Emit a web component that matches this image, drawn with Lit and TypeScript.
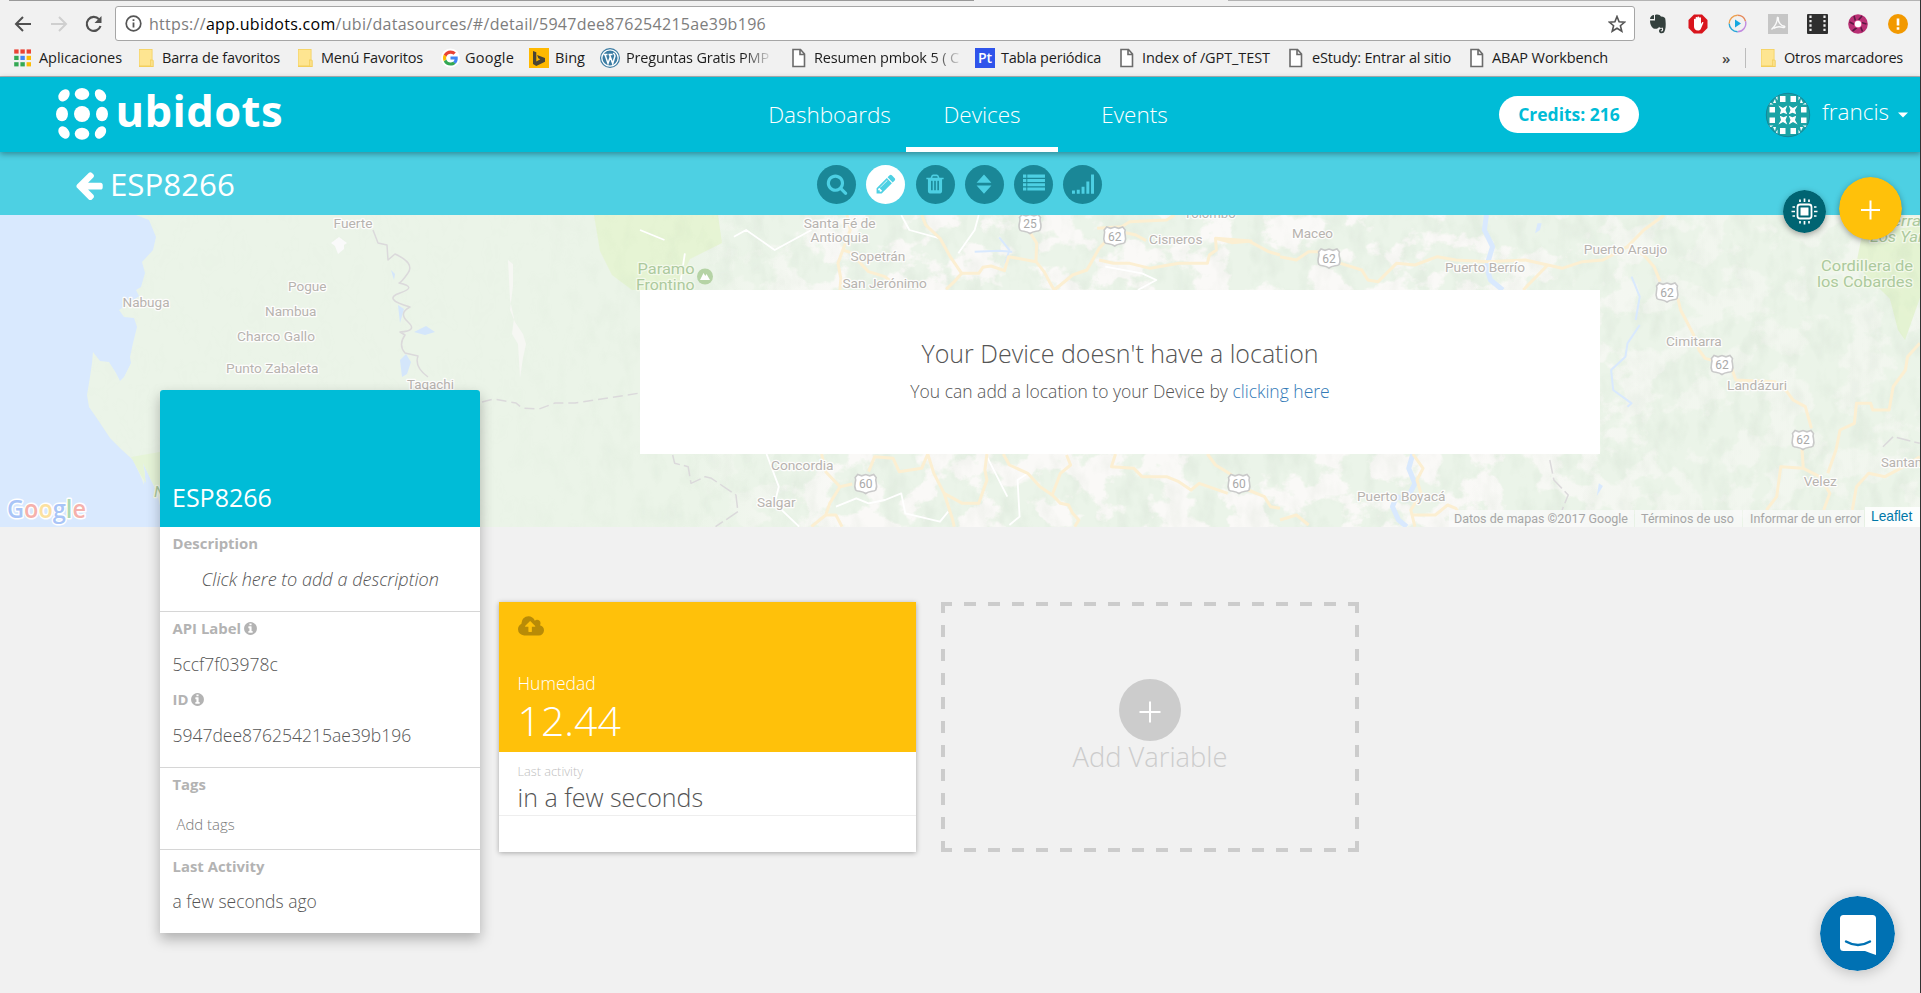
import { LitElement, html, svg, css } from "lit";
import { customElement, property } from "lit/decorators.js";

const P = {
  search: "M1216 832q0-185-131.5-316.5t-316.5-131.5-316.5 131.5-131.5 316.5 131.5 316.5 316.5 131.5 316.5-131.5 131.5-316.5zm512 832q0 52-38 90t-90 38q-54 0-90-38l-343-342q-179 124-399 124-143 0-273.5-55.5t-225-150-150-225-55.5-273.5 55.5-273.5 150-225 225-150 273.5-55.5 273.5 55.5 225 150 150 225 55.5 273.5q0 220-124 399l343 343q37 37 37 90z",
  pencil: "M491 1536l91-91-235-235-91 91v107h128v128h107zm523-928q0-22-22-22-10 0-17 7l-542 542q-7 7-7 17 0 22 22 22 10 0 17-7l542-542q7-7 7-17zm-54-192l416 416-832 832h-416v-416zm683 96q0 53-37 90l-166 166-416-416 166-165q36-38 90-38 53 0 91 38l235 234q37 39 37 91z",
  trash: "M704 1376v-704q0-14-9-23t-23-9h-64q-14 0-23 9t-9 23v704q0 14 9 23t23 9h64q14 0 23-9t9-23zm256 0v-704q0-14-9-23t-23-9h-64q-14 0-23 9t-9 23v704q0 14 9 23t23 9h64q14 0 23-9t9-23zm256 0v-704q0-14-9-23t-23-9h-64q-14 0-23 9t-9 23v704q0 14 9 23t23 9h64q14 0 23-9t9-23zm-544-992h448l-48-117q-7-9-17-11h-317q-10 2-17 11zm928 32v64q0 14-9 23t-23 9h-96v948q0 83-47 143.5t-113 60.5h-832q-66 0-113-58.5t-47-141.5v-952h-96q-14 0-23-9t-9-23v-64q0-14 9-23t23-9h309l70-167q15-37 54-63t79-26h320q40 0 79 26t54 63l70 167h309q14 0 23 9t9 23z",
  sort: "M896 130L1500 800H292zM896 1690L1500 1020H292z",
  list: "M0 130h270v250H0zM350 130h1440v250H350zM0 480h270v250H0zM350 480h1440v250H350zM0 830h270v250H0zM350 830h1440v250H350zM0 1180h270v250H0zM350 1180h1440v250H350z",
  signal: "M0 1430h240v270H0zM390 1370h240v330H390zM780 1110h240v590H780zM1170 700h240v1000H1170zM1550 130h250v1570H1550z",
  info: "M1152 1376v-160q0-14-9-23t-23-9h-96v-512q0-14-9-23t-23-9h-320q-14 0-23 9t-9 23v160q0 14 9 23t23 9h96v320h-96q-14 0-23 9t-9 23v160q0 14 9 23t23 9h448q14 0 23-9t9-23zm-128-896v-160q0-14-9-23t-23-9h-192q-14 0-23 9t-9 23v160q0 14 9 23t23 9h192q14 0 23-9t9-23zm640 416q0 209-103 385.5t-279.5 279.5-385.5 103-385.5-103-279.5-279.5-103-385.5 103-385.5 279.5-279.5 385.5-103 385.5 103 279.5 279.5 103 385.5z",
  cloud: "M1280 992q0-14-9-23l-352-352q-9-9-23-9t-23 9l-351 351q-10 12-10 24 0 14 9 23t23 9h224v352q0 13 9.5 22.5t22.5 9.5h192q13 0 22.5-9.5t9.5-22.5v-352h224q13 0 22.5-9.5t9.5-22.5zm640 288q0 159-112.5 271.5t-271.5 112.5h-1088q-185 0-316.5-131.5t-131.5-316.5q0-130 70-240t188-165q-2-30-2-43 0-212 150-362t362-150q156 0 285.5 87t188.5 231q71-62 166-62 106 0 181 75t75 181q0 76-41 138 130 31 213.5 135.5t83.5 238.5z",
  back: "M1664 896v128q0 53-32.5 90.5t-84.5 37.5h-704l293 294q38 36 38 90t-38 90l-75 76q-37 37-90 37-52 0-91-37l-651-652q-37-37-37-90 0-52 37-91l651-650q38-38 91-38 52 0 90 38l75 74q38 38 38 91t-38 91l-293 293h704q52 0 84.5 37.5t32.5 90.5z",
};

const fa = (name: keyof typeof P, w = 1792) =>
  html`<svg class="fa" viewBox="0 0 ${w} 1792"><path d=${P[name]} /></svg>`;

/* Text run whose letter spacing is set so that it spans a given advance. */
@customElement("fit-text")
class FitText extends LitElement {
  static styles = css`
    :host { display: inline-block; white-space: pre; }
  `;
  @property({ type: Number }) w = 0;
  render() {
    return html`<slot></slot>`;
  }
  firstUpdated() {
    const n = (this.textContent ?? "").length;
    const natural = this.getBoundingClientRect().width;
    if (n && this.w) this.style.letterSpacing = `${(this.w - natural) / n}px`;
  }
}

/* ---------- browser chrome ---------- */

const pageIcon = html`<svg class="bi" viewBox="0 0 14 20" width="14" height="20"><path d="M1 1.5h7.5l4 4.5v12.5H1zM8 1.5V6.5h4.5" fill="#fff" stroke="#6b6b6b" stroke-width="1.6" /></svg>`;
const folderIcon = html`<svg class="bi" viewBox="0 0 16 20" width="16" height="20"><path d="M1 1h13.5v10.5l1.2 1v6.5H1z" fill="#f3cf5c" /><path d="M1.5 1.8h12.2v9.6h-1.6v6H1.5z" fill="#fee591" /><path d="M12.8 12.5h2v5.4h-2z" fill="#fbe08a" /></svg>`;
const appColors = ["#ea4335", "#ea4335", "#ea4335", "#34a853", "#4285f4", "#fbbc05", "#34a853", "#34a853", "#fbbc05"];
const appsIcon = html`<svg class="bi" width="17" height="18" viewBox="0 0 17 18">
  ${appColors.map((c, i) => svg`<rect x=${(i % 3) * 6.2 + 0.2} y=${Math.floor(i / 3) * 6.4 + 0.4} width="4.4" height="4.2" fill=${c} />`)}
</svg>`;
const googleIcon = html`<svg class="bi" width="19" height="20" viewBox="0 0 48 48">
  <circle cx="24" cy="24" r="24" fill="#fff" />
  <path fill="#EA4335" d="M24 13c3 0 5.600 1 7.700 3l5.700-5.700C34 7.100 29.400 5 24 5 16.500 5 10.100 9.300 7 15.500l6.600 5.200C15.200 16.200 19.200 13 24 13z" />
  <path fill="#4285F4" d="M42.300 24.400c0-1.300-.1-2.600-.3-3.900H24v7.600h10.300c-.5 2.400-1.800 4.400-3.800 5.700l6.300 5C40.400 35.400 42.300 30.400 42.300 24.400z" />
  <path fill="#FBBC05" d="M13.600 27.300c-.4-1.100-.6-2.200-.6-3.400s.2-2.300.6-3.400L7 15.400C5.700 18 5 20.900 5 24s.7 6 2 8.500z" />
  <path fill="#34A853" d="M24 43c5.100 0 9.500-1.700 12.800-4.700l-6.300-4.900c-1.700 1.200-4 1.900-6.500 1.900-4.900 0-9-3.200-10.400-7.700L7 32.700C10.100 38.800 16.500 43 24 43z" />
</svg>`;
const bingIcon = html`<svg class="bi" width="20" height="20" viewBox="0 0 20 20"><rect width="20" height="20" fill="#ffb900" /><path d="M4 3l3.300 1.200v9.300l4-2.300-2-1-1.200-3.100 7.900 2.800v3.800L7.300 18 4 16z" fill="#4b4535" /></svg>`;
const wpIcon = html`<svg class="bi" width="20" height="20" viewBox="0 0 20 20"><circle cx="10" cy="10" r="10" fill="#3b7ca3" /><circle cx="10" cy="10" r="8.200" fill="none" stroke="#fff" stroke-width="1.300" /><path d="M3.500 6.500h4M8.500 6.500h4M5 6.500l3 9 2.200-6.500M9.500 6.500l3.200 9 2.300-7.500c0-1.500-1.300-2-1.500-3.200" fill="none" stroke="#fff" stroke-width="1.500" /></svg>`;
const ptIcon = html`<span class="pt">Pt</span>`;

const bookmarks: [unknown, string, number, string][] = [
  [appsIcon, "Aplicaciones", 83, "g8"],
  [folderIcon, "Barra de favoritos", 118, "g8"],
  [folderIcon, "Menú Favoritos", 102, "g8"],
  [googleIcon, "Google", 49, "g5"],
  [bingIcon, "Bing", 30, "g6"],
  [wpIcon, "Preguntas Gratis PMP", 143, "g6 fade"],
  [pageIcon, "Resumen pmbok 5 ( C", 145, "g8 fade"],
  [ptIcon, "Tabla periódica", 100, "g6"],
  [pageIcon, "Index of /GPT_TEST", 128, "g8"],
  [pageIcon, "eStudy: Entrar al sitio", 139, "g9"],
  [pageIcon, "ABAP Workbench", 116, "g8"],
];

@customElement("browser-chrome")
class BrowserChrome extends LitElement {
  static styles = css`
    :host { display: flex; flex-direction: column; height: 77px; box-sizing: border-box; background: #f1f1f1;
      border-bottom: 1px solid #aeb4b6; font-family: "Open Sans", "Noto Sans", sans-serif; font-weight: 400; }
    .edge { display: grid; grid-template-columns: 9px 965px 254px 1fr; height: 1px; }
    .edge .a { background: #999; grid-column: 2; }
    .edge .b { background: #b3b3b3; grid-column: 4; }
    .bar { display: flex; align-items: center; height: 45px; }
    .nav { display: grid; grid-template-columns: 36px 34px 1fr; width: 115px; padding-left: 14px; box-sizing: border-box; }
    .omni { display: flex; align-items: center; box-sizing: border-box; width: 1520px; height: 35px; background: #fff;
      border: 1px solid #a6a6a6; border-radius: 3px; padding: 0 8px 0 9px; }
    .url { flex: 1; padding-left: 7px; font-size: 16px; line-height: 32px; color: #7d7d7d; }
    .url fit-text { vertical-align: top; }
    .url b { font-weight: 400; color: #000; }
    .ext { display: grid; grid-template-columns: repeat(7, 40px); justify-items: center; margin-left: 2.500px; }
    .marks { display: grid; grid-template-columns: 124px 159px 144px 88px 71px 192px 183px 145px 169px 181px 252px 38px 1fr;
      height: 24px; padding-left: 14px; align-items: center; font-size: 14.500px; line-height: 20px; color: #1c1c1c; }
    .mk { display: flex; align-items: center; }
    .mk svg, .pt { flex: none; }
    .g5 { gap: 5px; } .g6 { gap: 6px; } .g8 { gap: 8px; } .g9 { gap: 9px; }
    .fade fit-text { -webkit-mask-image: linear-gradient(90deg, #000 82%, rgba(0,0,0,.15)); mask-image: linear-gradient(90deg, #000 82%, rgba(0,0,0,.15)); }
    .pt { width: 20px; height: 20px; background: #2f54eb; color: #fff; font: 600 14px/20px "Open Sans", sans-serif; text-align: center; }
    .more { font-size: 15px; font-weight: 600; color: #444; line-height: 20px; }
    .last { border-left: 1px solid #bcbcbc; margin-left: -15px; padding-left: 14px; height: 20px; }
  `;
  render() {
    return html`
      <div class="edge"><i class="a"></i><i class="b"></i></div>
      <div class="bar">
        <div class="nav">
          <svg width="18" height="18" viewBox="0 0 18 18"><path d="M17 9H2.500M9 2L2 9l7 7" fill="none" stroke="#505050" stroke-width="2" /></svg>
          <svg width="18" height="18" viewBox="0 0 18 18"><path d="M1 9h14.500M9 2l7 7-7 7" fill="none" stroke="#cfcfcf" stroke-width="2" /></svg>
          <svg width="20" height="18" viewBox="0 0 20 18"><path d="M15 4.200A7 7 0 1 0 16.500 11" fill="none" stroke="#505050" stroke-width="2.200" /><path d="M17.500 1v7h-7z" fill="#505050" /></svg>
        </div>
        <div class="omni">
          <svg width="17" height="17" viewBox="0 0 17 17"><circle cx="8.500" cy="8.500" r="7.300" fill="none" stroke="#555" stroke-width="1.700" /><path d="M8.500 7.500v5M8.500 4.200v1.900" stroke="#555" stroke-width="1.800" /></svg>
          <div class="url"><fit-text w="617">https://<b>app.ubidots.com</b>/ubi/datasources/#/detail/5947dee876254215ae39b196</fit-text></div>
          <svg width="18" height="18" viewBox="0 0 18 18"><path d="M9 1.500l2.100 5.200 5.600.4-4.300 3.600 1.400 5.500L9 13.200l-4.800 3 1.400-5.500L1.300 7.100l5.600-.4z" fill="none" stroke="#555" stroke-width="1.600" /></svg>
        </div>
        <div class="ext">
          <svg width="18" height="20" viewBox="0 0 18 20"><path d="M5 1v4H1C1 3 3 1 5 1zM6 1c3-1 5 0 6 1.500 3 0 4.500 1 4.500 4 .5 5 .3 9-1.500 12-2 1.500-5 .8-5-1.500 0-2 1.500-2.500 3-2.300v1.500c-2-.2-1.500 1.500 0 1.300 1.500-.5 1.500-3 .5-4-1.500.8-3 .3-3.500-.8-.5 2-3 2.300-5.500 1.800C2 12.500 1 10 1 6.500h5z" fill="#34403d" /></svg>
          <svg width="20" height="20" viewBox="0 0 20 20"><path d="M6 .5h8L19.500 6v8L14 19.500H6L.5 14V6z" fill="#d9151d" /><path d="M6 10V5.500a.8.8 0 0 1 1.600 0V4a.9.900 0 0 1 1.800 0V3.300a.9.900 0 0 1 1.800 0V4.200a.9.900 0 0 1 1.800 0V10l1-1.600c.7-.8 1.700-.2 1.300.6L13 14.500c-.6 1.600-1.500 2-3 2-2.800 0-4-1.800-4-4z" fill="#fff" /></svg>
          <svg width="19" height="19" viewBox="0 0 19 19"><path d="M9.500 1.200a8.300 8.300 0 0 1 8 6" fill="none" stroke="#e58a5c" stroke-width="1.400" /><path d="M17.500 7.300a8.300 8.300 0 0 1-8 10.500" fill="none" stroke="#c28be0" stroke-width="1.400" /><path d="M9.500 17.800a8.300 8.300 0 0 1-8.300-8.300" fill="none" stroke="#2aa7d8" stroke-width="1.400" /><path d="M1.200 9.500a8.300 8.300 0 0 1 8.300-8.300" fill="none" stroke="#eda04f" stroke-width="1.400" /><path d="M7 5.500l6 4-6 4z" fill="#16a8e0" /></svg>
          <svg width="20" height="20" viewBox="0 0 20 20"><rect width="20" height="20" fill="#c6c6c6" /><path d="M3.500 15.500C6 13 9.500 8 9.300 4.200c-.2-1.200 1.200-1.200 1 .2C10 8 13 12 16.500 12.300c1 .8-.5 1.500-2 1-3-1-6.500-.5-9 1.200" fill="none" stroke="#fafafa" stroke-width="1.400" /></svg>
          <svg width="21" height="20" viewBox="0 0 21 20"><rect width="21" height="20" rx="1" fill="#2f2f2f" /><path d="M3.500 1.500v17M17.500 1.500v17" stroke="#eee" stroke-width="2.200" stroke-dasharray="2.400 2" /></svg>
          <svg width="20" height="20" viewBox="0 0 20 20"><circle cx="10" cy="10" r="9.800" fill="#b93074" /><path d="M10 6.500L14 2M13.200 8.500l5.300 1.500M12.500 12.500l2 5M9 13.500L4.500 17M6.500 10.500L1.500 8M7.500 7L6 2" stroke="#5d1a44" stroke-width="1.600" /><circle cx="10" cy="10" r="4.200" fill="#d64b8b" /><circle cx="10" cy="10" r="3.200" fill="#fff" /></svg>
          <svg width="20" height="20" viewBox="0 0 20 20"><circle cx="10" cy="10" r="10" fill="#f29900" /><path d="M10 4.500v7M10 13.300v2.400" stroke="#fff" stroke-width="2.600" /></svg>
        </div>
      </div>
      <div class="marks">
        ${bookmarks.map(([icon, text, w, cls]) => html`<div class="mk ${cls}">${icon}<fit-text w=${w}>${text}</fit-text></div>`)}
        <div class="more">»</div>
        <div class="mk g8 last">${folderIcon}<fit-text w="119">Otros marcadores</fit-text></div>
      </div>
    `;
  }
}

/* ---------- map ---------- */

type Label = [number, number, string, number, string?];
const labels: Label[] = [
  [333.5, 12.7, "Fuerte", 39], [288, 75.5, "Pogue", 38.5], [122.5, 92, "Nabuga", 47], [265, 101, "Nambua", 51.5],
  [237, 126, "Charco Gallo", 78], [226, 158, "Punto Zabaleta", 92.5], [407, 174.3, "Tagachi", 47],
  [803.7, 13.3, "Santa Fé de", 72], [810.6, 27, "Antioquia", 58], [850.6, 46, "Sopetrán", 54.7], [842.4, 72.7, "San Jerónimo", 84.5],
  [1149, 29, "Cisneros", 53.5], [1183.7, 2.5, "Yolombó", 52], [771, 255, "Concordia", 62.5], [757, 292, "Salgar", 38.5],
  [1292, 23, "Maceo", 41], [1445, 56.7, "Puerto Berrío", 80], [1583.8, 39, "Puerto Araujo", 83.5], [1666, 130.7, "Cimitarra", 55.7],
  [1727, 174.7, "Landázuri", 60], [1803.7, 271, "Velez", 33], [1881, 251.7, "Santander", 60], [1357, 286, "Puerto Boyacá", 88.5],
  [637.500, 59, "Paramo", 57, "park"], [636, 75, "Frontino", 58.500, "park"], [154, 282, "N", 11, "park it"],
  [1821, 56, "Cordillera de", 92, "park"], [1817, 72.2, "los Cobardes", 96, "park"],
  [1882, 11, "Serranía", 62, "park it"], [1870, 26.700, "Los Yariguíes", 96, "park it"],
];
const shields: [number, number, string][] = [
  [1030, 9, "25"], [1114.7, 21.5, "62"], [865.7, 269, "60"], [1239, 269, "60"],
  [1329, 43.5, "62"], [1667, 77.5, "62"], [1722, 150, "62"], [1803, 225, "62"],
];
const roadsMid = [
  "M690 15L700 45 735 85 760 140 788 190 770 215 750 238", "M788 190L830 190 840 172 860 168 893 182 903 140 970 155 990 185 1003 215 1015 240",
  "M507 15L515 60 497 120 485 160 492 205 490 240", "M497 120L515 127 560 185 600 200 640 238", "M956 68L972 100 970 155",
  "M1015 240L1060 195 1095 180 1125 115 1140 95", "M1125 150L1160 160 1200 160 1250 175 1320 160 1390 160 1395 135 1412 120 1410 85 1490 92 1540 125 1568 135",
  "M1190 68L1215 75 1240 92M1410 85L1450 98 1500 93", "M1120 55L1180 50 1200 35 1290 30 1310 15", "M445 732L455 785 490 830 520 822M490 830L465 880 455 915 420 950",
  "M560 785L575 740 620 745 635 785 690 775 705 732 720 790 745 850 765 925 770 950", "M745 850L790 880 830 880 850 810 845 780 850 732",
  "M455 915L480 915 495 950", "M890 732L905 765 950 790 980 830 1010 855 1030 880 1050 885 1060 910 1075 930 1065 950M1010 855L1030 790 1055 765 1045 735",
  "M1165 732L1155 770 1210 775 1230 800 1290 800 1320 815 1350 840 1370 820 1440 850M1390 732L1410 765 1450 795M1490 840L1530 860 1545 890 1568 895",
];
const roadsRight = [
  "M0 140L40 150 70 125 95 125M148 160L200 180 215 210 240 215 285 160 330 165 385 140 430 150 510 155 600 150 655 165 690 175 740 155 790 150 850 110 890 60 940 15",
  "M655 165L595 240", "M850 110L890 135 915 170 930 215", "M973 265L980 300 1010 370 1025 420 1040 445 1055 450", "M1105 475L1115 510 1210 515 1240 545 1255 570 1285 590 1300 655",
  "M1277 718L1280 775 1225 770 1215 860 1190 900M1280 775L1320 800 1345 850 1330 900", "M1565 400L1535 440 1530 480 1500 530 1490 600 1450 600 1445 580 1410 580 1405 640 1370 660 1360 720 1340 790",
  "M1565 740L1540 760 1480 800 1440 790 1410 830 1400 900", "M325 732L350 775 335 810 345 850 320 900 330 950M325 915L380 915 410 885 430 895 440 915", "M0 930L40 915 70 945",
];
const streets = [
  "M0 60L60 90M110 130L100 210M230 80L260 60 330 120 420 60M640 15L660 60 735 85M780 130L820 60 830 15M1220 240L1265 210 1230 190 1140 170M310 732L340 830 330 880 390 950M480 890L530 865 560 880 600 870 640 850 650 910 735 935 755 905M905 945L930 920 925 810 950 790M850 740L900 860",
];
const rivers = "M505 15L500 60 520 110 505 170 515 210 545 240M325 732L315 775 330 820 310 870 285 860 275 890 290 930 310 950";
const creeks = "M860 200L880 260 870 330M880 345L850 400 845 440 810 480 815 540 860 580 850 590";

@customElement("geo-map")
class GeoMap extends LitElement {
  static styles = css`
    :host { display: block; height: 312px; overflow: hidden; }
    svg { display: block; }
    text { font-family: Roboto, sans-serif; font-weight: 400; font-size: 13.5px; fill: #b7b3af; paint-order: stroke; stroke: #fdfdfc; stroke-width: 2.500px; stroke-linejoin: round; }
    .park { fill: #acc99d; font-size: 15px; stroke: #f3f9ea; }
    .it { font-style: italic; }
    .num { font-size: 12px; fill: #a9a9a9; stroke: none; text-anchor: middle; }
    .road, .street, .river, .border { fill: none; vector-effect: non-scaling-stroke; stroke-linejoin: round; }
    .road { stroke: #fcefd2; stroke-width: 3px; }
    .street { stroke: #fff; stroke-width: 1.800px; }
    .river { stroke: #d9e9fe; stroke-width: 5px; }
    .thin { stroke-width: 2px; }
    .border { stroke: #dbd9db; stroke-width: 1.500px; }
    .logo { font-family: "Open Sans", sans-serif; font-size: 25px; font-weight: 600; stroke: #fff; stroke-width: 3px; }
  `;
  render() {
    const set = (list: string[], cls: string) => list.map((d) => svg`<path class=${cls} d=${d} />`);
    return html`<svg width="1921" height="312" viewBox="0 0 1921 312">
      <defs>
        <filter id="woods" x="0" y="0" width="100%" height="100%" color-interpolation-filters="sRGB">
          <feTurbulence type="fractalNoise" baseFrequency="0.026 0.03" numOctaves="5" seed="8" />
          <feColorMatrix values="0 0 0 0 .922  0 0 0 0 .956  0 0 0 0 .912  12 0 0 0 -5" />
        </filter>
        <filter id="relief" x="0" y="0" width="100%" height="100%" color-interpolation-filters="sRGB">
          <feTurbulence type="fractalNoise" baseFrequency="0.06 0.035" numOctaves="3" seed="3" />
          <feColorMatrix values="0 0 0 0 .6  0 0 0 0 .7  0 0 0 0 .6  1.600 0 0 0 -.7" />
        </filter>
        <linearGradient id="fadeIn"><stop offset="0" stop-color="#ebf4e8" /><stop offset=".36" stop-color="#ebf4e8" /><stop offset=".44" stop-color="#ebf4e8" stop-opacity="0" /></linearGradient>
        <linearGradient id="east"><stop offset=".76" stop-color="#ebf4e8" stop-opacity="0" /><stop offset=".88" stop-color="#ebf4e8" stop-opacity=".55" /></linearGradient>
        <linearGradient id="reliefFade"><stop offset=".25" stop-color="#fff" stop-opacity=".1" /><stop offset=".42" stop-color="#fff" /></linearGradient>
        <mask id="reliefMask"><rect width="1921" height="312" fill="url(#reliefFade)" /></mask>
      </defs>
      <rect width="1921" height="312" fill="#faf9f7" />
      <rect width="1921" height="312" filter="url(#woods)" />
      <rect width="1921" height="312" fill="url(#fadeIn)" />
      <rect width="1921" height="312" fill="url(#east)" />
      <path d="M594 0H718L722 28 690 44 675 75H648L632 75 612 60 600 36z" fill="#e6f4d2" opacity=".9" />
      <path d="M1862 20L1921 10V80L1905 125 1898 115 1890 84 1856 50z" fill="#e2f2cc" opacity=".8" />
      <g mask="url(#reliefMask)"><rect width="1921" height="312" filter="url(#relief)" opacity=".14" /></g>
      <path d="M0 0H136L149 5 156 22 153 35 142 47 145 58 141 72 136 75 139 81 131 87 119 95 124 102 134 103 137 112 133 128 130 142 131 148 124 162 120 166 116 158 109 147 100 146 93 137 92 148 90 162 87 180 89 192 98 205 110 223 122 235 133 245 141 262 144 270 145 258 143 248 151 265 157 278 165 312H0z" fill="#d9e9fe" />
      <path d="M131 242L165 236V290L151 265 143 248 146 268 142 262z" fill="#e6f4d8" />
      <path d="M331 28l8-6 8 6-3 2v4l-6 5-3-8z" fill="#fafafa" />
      <path d="M400 145l6-6 5 8-4 12-5 3zM414 117l12-6 9 6-10 3zM391 55l4 4-1 6zM398 90l6 4-4 14zM523 20l16 12" fill="#d4e6fb" />
      <path d="M508 45l5 4v22l-3 24 5 12 8 12 3 10-3 14-3 20-2-34-6-10 2-16-4-18z" fill="#f6f7f3" />
      <path class="border" d="M373 15L378 28 387 30 388 45 395 39Q415 48 408 58T399 68Q418 72 400 78T410 92Q398 98 408 107T400 117L405 120Q398 130 405 138L418 141Q414 152 428 162" />
      <path class="border" d="M482 187L494 184 516 188 522 193 539 194 555 188 575 188 640 178" stroke-dasharray="10 5" />
      <g transform="translate(640 -5) scale(.40816 .33333)">
        ${set(streets, "street")}
        <path class="river thin" d="M820 125L880 122 912 125M880 82L905 120 895 160" />
        <path class="border" d="M80 735L85 760 118 770 125 820 160 800 175 805 235 855 240 905 185 950" stroke-dasharray="14 4" />
        ${set(roadsMid, "road")}
      </g>
      <g transform="translate(1280 -5) scale(.4088 .33333)">
        <path class="river" d=${rivers} />
        <path class="river thin" d=${creeks} />
        <path d="M630 40h10l-4 20-12 10zM780 820l10 8-15 30z" fill="#d9e9fe" />
        <path class="border" d="M660 750L670 810 705 855 690 900M1475 710L1500 680 1565 700" stroke-dasharray="14 4" />
        ${set(roadsRight, "road")}
      </g>
      ${labels.map(([x, y, t, w, c]) => svg`<text class=${c ?? ""} x=${x} y=${y} textLength=${w} lengthAdjust="spacingAndGlyphs">${t}</text>`)}
      <circle cx="705" cy="61.500" r="8" fill="#b5d3a5" /><path d="M700 65l3.500-7 1.800 3 1.200-2 3.500 6z" fill="#fff" />
      ${shields.map(([x, y, n]) => svg`<g transform="translate(${x} ${y})">
        <path d="M-10.500 -6.500l2.500-3 4 1.300 4-1.300 4 1.300 4-1.300 2.500 3c-2 4 2.500 7-.5 12.500-2 2-6 .5-10 3.500-4-3-8-1.500-10-3.500-3-5.500 1.500-8.500-.5-12.500z" fill="#fff" stroke="#c9c9c9" stroke-width="1.600" />
        <text class="num" y="4.300">${n}</text></g>`)}
      <text class="logo" x="7" y="303" textLength="79" lengthAdjust="spacingAndGlyphs"><tspan fill="#a9c5f7">G</tspan><tspan fill="#f5b1ac">o</tspan><tspan fill="#fbe1a0">o</tspan><tspan fill="#a9c5f7">g</tspan><tspan fill="#abd9b5">l</tspan><tspan fill="#f5b1ac">e</tspan></text>
    </svg>`;
  }
}

/* ---------- application ---------- */

const tools: [keyof typeof P, boolean][] = [["search", false], ["pencil", true], ["trash", false], ["sort", false], ["list", false], ["signal", false]];

@customElement("app-root")
class AppRoot extends LitElement {
  static styles = css`
    :host { display: block; position: relative; width: 1921px; height: 993px; overflow: hidden; background: #f1f1f1;
      font-family: "Open Sans", sans-serif; font-weight: 300; color: #555; }
    .fa { fill: currentColor; display: block; flex: none; }
    header { position: relative; z-index: 2; display: grid; grid-template-columns: 753px 458px 1fr; height: 75px; background: #00bcd7; color: #fff;
      box-shadow: 0 2px 6px rgba(0,0,0,.35); }
    .logo { padding: 9px 0 0 54px; }
    .logo svg { display: block; }
    .brand { font: 700 43.500px "Open Sans", sans-serif; fill: #fff; }
    nav { display: grid; grid-template-columns: 153px 152px 153px; font-size: 22.5px; line-height: 75px; text-align: center; }
    .on { box-shadow: inset 0 -5px #fff; }
    .user { display: flex; align-items: center; padding-left: 288px; }
    .credits { width: 140px; height: 37px; border-radius: 19px; background: #fff; color: #00bcd7; font-size: 17.5px; font-weight: 700; line-height: 36px; text-align: center; }
    .avatar { margin-left: 126px; display: block; }
    .name { font-size: 22.5px; line-height: 30px; margin: -6px 9px 0 11px; }
    .sub { display: grid; grid-template-columns: 817px 1fr; align-items: center; height: 63px; background: #4dd0e3; color: #fff; }
    .title { display: flex; align-items: center; gap: 5px; padding-left: 73px; font-size: 31.25px; line-height: 40px; font-weight: 400; }
    .title .fa { width: 32px; height: 32px; margin-top: 2px; }
    .tools { display: flex; gap: 10.300px; padding-top: 1px; }
    .tool { display: flex; align-items: center; justify-content: center; width: 39px; height: 39px; border-radius: 50%; background: #1a8797; color: #4dd0e3; }
    .tool .fa { width: 22px; height: 22px; }
    .tool.active { background: #fff; }
    .place { position: relative; display: grid; height: 312px; }
    .place > * { grid-area: 1 / 1; }
    .notice { position: relative; align-self: start; box-sizing: border-box; margin: 75px 0 0 640px; width: 960px; height: 164px; background: #fff;
      display: flex; flex-direction: column; justify-content: center; padding-top: 1px; text-align: center; line-height: 37.500px; }
    .notice h2 { margin: 0; font-weight: 300; font-size: 25px; }
    .notice p { margin: 0; font-size: 17.500px; }
    .notice a { color: #337ab7; }
    .credit { position: relative; justify-self: end; align-self: end; display: flex; align-items: flex-end; font: 12.500px/18px Roboto, sans-serif; color: #a6a6a6; }
    .credit span { background: rgba(250,250,249,.75); height: 17px; box-sizing: border-box; margin-right: 1px; }
    .c1 { width: 185px; padding-left: 5px; } .c2 { width: 107px; padding-left: 6px; } .c3 { width: 121px; padding-left: 7px; }
    .credit a { width: 56px; height: 20px; box-sizing: border-box; padding-left: 6px; background: rgba(255,255,255,.85); color: #0078a8; font: 13.750px/19px "Liberation Sans", sans-serif; }
    main { display: grid; grid-template-columns: 320px 417px 418px; align-items: start; padding-left: 160px; }
    aside { position: relative; margin-top: -137px; background: #fff; border-radius: 3px 3px 0 0; box-shadow: 0 6px 14px rgba(0,0,0,.28); }
    .cover { display: flex; align-items: flex-end; height: 137px; box-sizing: border-box; padding: 0 12px 13px; border-radius: 3px 3px 0 0; background: #00bcd7; color: #fff; font-size: 25px; line-height: 34px; font-weight: 400; }
    section { padding: 6px 12px 14px 12.500px; border-bottom: 1px solid #d6d6d6; }
    section:last-child { border: 0; }
    .lb { display: flex; align-items: center; gap: 2px; font-size: 14.900px; font-weight: 700; line-height: 20px; color: #b3b3b3; }
    .lb .fa { width: 15px; height: 15px; }
    .val { margin-top: 8px; font-size: 17.500px; line-height: 36px; }
    .val + .lb { margin-top: 7px; }
    .hint { font-style: italic; text-align: center; font-size: 18.100px; }
    .tags { margin: 12px 0 -7px 4px; font-size: 14.900px; line-height: 36px; color: #777; }
    section:last-child .val { margin-top: 7px; }
    .var { margin: 75px 0 0 19px; width: 417px; height: 250px; background: #fff; box-shadow: 0 1px 5px rgba(0,0,0,.3); }
    .reading { height: 150px; box-sizing: border-box; padding: 10px 18.500px; background: #ffc10a; color: #fff; }
    .reading .fa { width: 26px; height: 26px; color: #b88b07; }
    .vn { font-size: 17.500px; line-height: 26px; margin-top: 32px; }
    .vv { font-size: 41px; line-height: 48px; }
    .seen { height: 63px; padding: 0 18.500px; border-bottom: 1px solid #eee; }
    .seen small { display: block; padding-top: 9px; font-size: 12.750px; line-height: 20px; color: #c0c0c0; }
    .seen div { font-size: 25px; line-height: 32px; }
    .add { margin: 75px 0 0 44px; width: 418px; height: 250px; box-sizing: border-box; padding-top: 77px; display: flex; flex-direction: column; align-items: center; color: #ccc;
      --h: repeating-linear-gradient(90deg, #ccc 0 11px, transparent 11px 23px, #ccc 23px 24px);
      --v: repeating-linear-gradient(#ccc 0 11px, transparent 11px 23px, #ccc 23px 24px);
      background: var(--h) top / 100% 4px no-repeat, var(--h) bottom / 100% 4px no-repeat, var(--v) left / 4px 100% no-repeat, var(--v) right / 4px 100% no-repeat; }
    .add p { margin: -3px 0 0; font-size: 27.300px; line-height: 38px; }
    .fab { position: absolute; z-index: 3; display: block; border-radius: 50%; }
    .chip { left: 1783px; top: 190px; filter: drop-shadow(0 2px 3px rgba(0,0,0,.35)); }
    .plus { left: 1839px; top: 177px; filter: drop-shadow(0 2px 3px rgba(0,0,0,.35)); }
    .chat { left: 1820px; top: 896px; box-shadow: 0 2px 14px rgba(0,0,0,.22); }
    .rim { position: absolute; z-index: 4; top: 0; right: 0; width: 1px; height: 100%; background: #333; }
  `;
  render() {
    const cells = [-1, 1];
    return html`
      <browser-chrome></browser-chrome>
      <header>
        <div class="logo">
          <svg width="236" height="56" viewBox="54 86 236 56" fill="#fff">
            <ellipse cx="82" cy="94" rx="7.300" ry="6" /><circle cx="82" cy="114" r="8" /><ellipse cx="82" cy="133.700" rx="7.300" ry="6" />
            <ellipse cx="62" cy="114" rx="6" ry="7.300" /><ellipse cx="102" cy="114" rx="6" ry="7.300" />
            <ellipse cx="64" cy="95.300" rx="5" ry="6.700" transform="rotate(38 64 95.300)" /><ellipse cx="100.500" cy="95.300" rx="5" ry="6.700" transform="rotate(-38 100.500 95.300)" />
            <ellipse cx="64" cy="132.500" rx="5" ry="6.700" transform="rotate(-38 64 132.500)" /><ellipse cx="100.500" cy="132.500" rx="5" ry="6.700" transform="rotate(38 100.500 132.500)" />
            <text class="brand" x="115.500" y="126.700" textLength="167">ubidots</text>
          </svg>
        </div>
        <nav><span>Dashboards</span><span class="on">Devices</span><span>Events</span></nav>
        <div class="user">
          <div class="credits">Credits: 216</div>
          <svg class="avatar" width="46" height="46" viewBox="-23 -23 46 46">
            <clipPath id="disc"><circle r="22" /></clipPath>
            <circle r="22" fill="#1aa3a5" />
            <g clip-path="url(#disc)" fill="#fff">
              ${cells.map((a) => cells.map((b) => svg`<g transform="scale(${a} ${b})">
                <path d="M.8 .8L4.500 2.200 8.200 .8 7 5 9.600 9.600 5 7 .8 9.600 2.500 5z" />
                <rect x="2.500" y="13" width="5.500" height="6" /><rect x="13" y="2.500" width="5.500" height="5.500" />
                <path d="M10.500 20.500V14.500L14 20.500zM20.500 10.500H14.500L20.500 14zM12 12l3 0-2 4z" />
              </g>`))}
            </g>
            <circle r="21.700" fill="none" stroke="#15879b" />
          </svg>
          <div class="name">francis</div>
          <svg width="10" height="6" viewBox="0 0 10 6"><path d="M0 .5h10L5 5.500z" fill="#fff" /></svg>
        </div>
      </header>
      <div class="sub">
        <div class="title">${fa("back")}<span>ESP8266</span></div>
        <div class="tools">${tools.map(([n, on]) => html`<div class="tool ${on ? "active" : ""}">${fa(n)}</div>`)}</div>
      </div>
      <div class="place">
        <geo-map></geo-map>
        <div class="notice">
          <h2>Your Device doesn't have a location</h2>
          <p>You can add a location to your Device by <a>clicking here</a></p>
        </div>
        <div class="credit">
          <span class="c1"><fit-text w="174">Datos de mapas ©2017 Google</fit-text></span><span class="c2"><fit-text w="93">Términos de uso</fit-text></span><span class="c3"><fit-text w="111">Informar de un error</fit-text></span><a>Leaflet</a>
        </div>
      </div>
      <main>
        <aside>
          <div class="cover">ESP8266</div>
          <section><div class="lb">Description</div><div class="val hint">Click here to add a description</div></section>
          <section>
            <div class="lb">API Label ${fa("info")}</div><div class="val">5ccf7f03978c</div>
            <div class="lb">ID ${fa("info")}</div><div class="val">5947dee876254215ae39b196</div>
          </section>
          <section><div class="lb">Tags</div><div class="tags">Add tags</div></section>
          <section><div class="lb">Last Activity</div><div class="val">a few seconds ago</div></section>
        </aside>
        <div class="var">
          <div class="reading">${fa("cloud", 1920)}<div class="vn">Humedad</div><div class="vv">12.44</div></div>
          <div class="seen"><small>Last activity</small><div>in a few seconds</div></div>
        </div>
        <div class="add">
          <svg width="62" height="62" viewBox="-31 -31 62 62"><circle r="31" fill="#ccc" /><path d="M-10.500 2h21M0 -8.500v21" stroke="#fff" stroke-width="2" /></svg>
          <p>Add Variable</p>
        </div>
      </main>
      <svg class="fab chip" width="43" height="43" viewBox="-21.500 -21.500 43 43"><circle r="21.500" fill="#006472" /><g fill="none" stroke="#fff"><rect x="-7" y="-7" width="14" height="14" rx="2.500" stroke-width="1.800" /><path d="M-4.500 -9.500V-12M0 -9.500V-13M4.500 -9.500V-12M-4.500 9.500V12M0 9.500V13M4.500 9.500V12M-9.500 -4.500H-12M-9.500 0H-13M-9.500 4.500H-12M9.500 -4.500H12M9.500 0H13M9.500 4.500H12" stroke-width="1.700" /></g><rect x="-4" y="-4" width="8" height="8" fill="#fff" /></svg>
      <svg class="fab plus" width="63" height="63" viewBox="-31.500 -31.500 63 63"><circle r="31.500" fill="#ffc10a" /><path d="M-9.500 1.500h19M0 -8v19" stroke="#fff" stroke-width="2" /></svg>
      <svg class="fab chat" width="75" height="75" viewBox="0 0 75 75"><circle cx="37.500" cy="37.500" r="37.500" fill="#0071b3" /><path d="M23.500 19H52.500Q56 19 56 22.500V59Q50 57 45 55H23.500Q20 55 20 51.500V22.500Q20 19 23.500 19z" fill="#fff" /><path d="M26 45.500Q38 52.500 50 45.500" fill="none" stroke="#0071b3" stroke-width="2.400" stroke-linecap="round" /></svg>
      <div class="rim"></div>
    `;
  }
}
